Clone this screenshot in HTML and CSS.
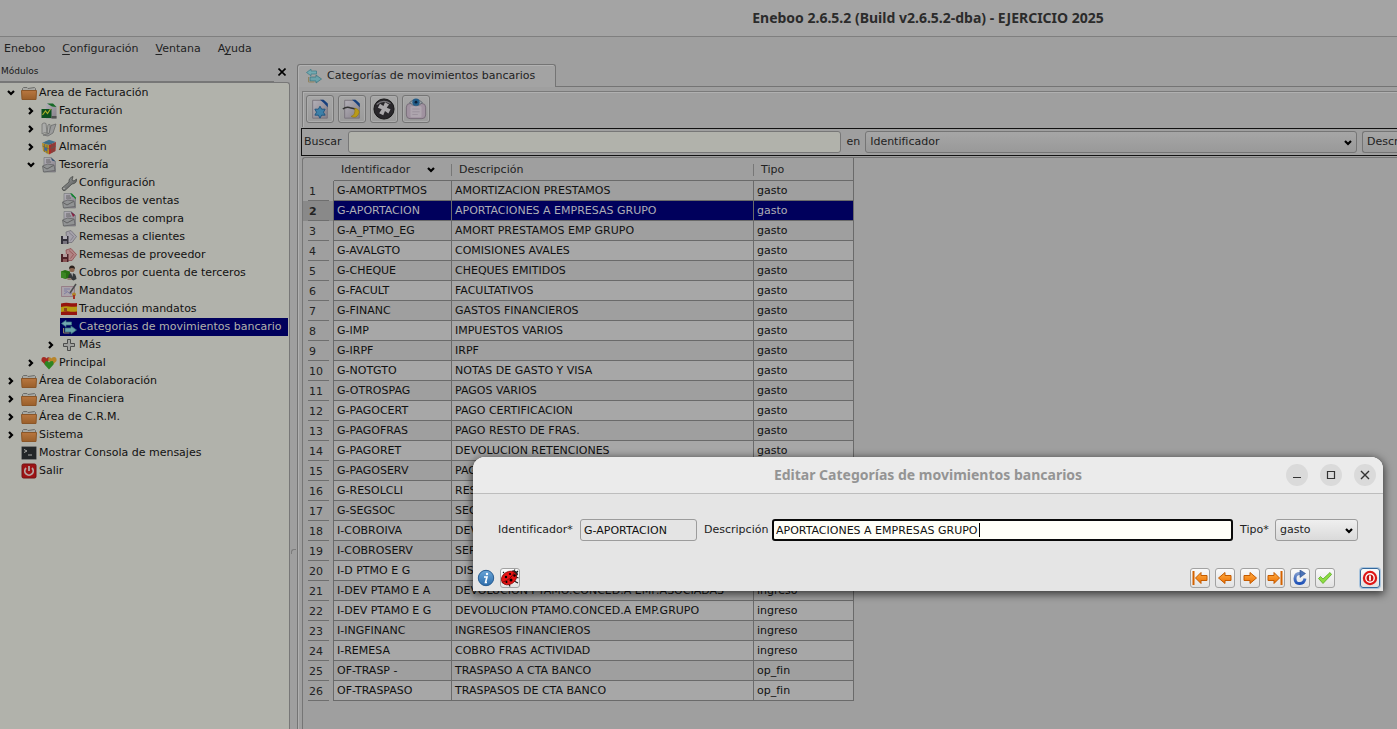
FILE: index.html
```html
<!DOCTYPE html>
<html lang="es">
<head>
<meta charset="utf-8">
<title>Eneboo 2.6.5.2 (Build v2.6.5.2-dba) - EJERCICIO 2025</title>
<link rel="stylesheet" href="styles.css">
</head>
<body>
<svg class="defs" aria-hidden="true">
  <defs>
    <linearGradient id="gFolder" x1="0" y1="0" x2="0" y2="1"><stop offset="0" stop-color="#b87740"/><stop offset="1" stop-color="#9a5f2a"/></linearGradient>
    <linearGradient id="gPage" x1="0" y1="0" x2="1" y2="1"><stop offset="0" stop-color="#b3b0b8"/><stop offset="1" stop-color="#857f88"/></linearGradient>
    <linearGradient id="gGrey" x1="0" y1="0" x2="1" y2="1"><stop offset="0" stop-color="#a5a7a6"/><stop offset="1" stop-color="#4c4e4e"/></linearGradient>
    <linearGradient id="gOrange" x1="0" y1="0" x2="0" y2="1"><stop offset="0" stop-color="#ffae45"/><stop offset="1" stop-color="#ee6f00"/></linearGradient>
    <linearGradient id="gInfo" x1="0" y1="0" x2="0" y2="1"><stop offset="0" stop-color="#6aa5d8"/><stop offset="1" stop-color="#2c6cab"/></linearGradient>
    <linearGradient id="gBlue" x1="0" y1="0" x2="0" y2="1"><stop offset="0" stop-color="#7a97cc"/><stop offset="1" stop-color="#1f52b8"/></linearGradient>
  </defs>
  <symbol id="down" viewBox="0 0 8 6"><path d="M1 1l3 3 3-3" fill="none" stroke="#000" stroke-width="2.200"/></symbol>
  <symbol id="right" viewBox="0 0 6 8"><path d="M1 1l3 3-3 3" fill="none" stroke="#000" stroke-width="2.200"/></symbol>
  <symbol id="folder" viewBox="0 0 16 16"><path d="M1.500 6V3.500l1-1H6l1 1 6.500-1 1 1v2" fill="#a7a8a4" stroke="#6c6d6a"/><path d="M.5 5.500h15l-.5 9H1z" fill="url(#gFolder)" stroke="#8a5628"/></symbol>
  <symbol id="fact" viewBox="0 0 16 16"><path d="M5 .5h6.500L15.500 4V15.500H5z" fill="url(#gPage)"/><path d="M6 .5h6L15.500 4 11 3.500z" fill="#176a26"/><path d="M.5 6h10v9H.5z" fill="#0c4f1f"/><path d="M1.500 12l3-4 2 2.500 3-4.500" fill="none" stroke="#a8ad28" stroke-width="1.200"/><path d="M10.500 13h5v2.500h-5z" fill="#505250"/></symbol>
  <symbol id="book" viewBox="0 0 16 16"><path d="M1 3q2-2 4-.5L6 12q-3-1-5 1zM6 12L7 4q1-1 2-.5v9.500z" fill="#aaaba9" stroke="#727372" stroke-width=".8"/><path d="M10 4.500l5-1.500-3 9-5 3-5-1 6-1.500z" fill="#9a9b9b" stroke="#646565" stroke-width=".7"/></symbol>
  <symbol id="cube" viewBox="0 0 16 16"><path d="M1 4l7-3.200L15 3 8 6z" fill="#3d7190"/><path d="M1 4l7 2v9.500L2 12z" fill="#b58c25"/><path d="M8 6l7-3-.5 9L8 15.500z" fill="#a92d2c"/><path d="M1.500 7l6.500 3 7-3M3.500 5v8M6 5.500v9M11 5v9M13 4v9M4 3l7 2" fill="none" stroke="#49655c" stroke-width=".6"/><path d="M3.500 8.200l2.500 1v3l-2.500-1z" fill="#3d64a0"/></symbol>
  <symbol id="doc" viewBox="0 0 16 16"><path d="M3 .5h7l4.500 4V15H3z" fill="url(#gPage)" stroke="#777a7c" stroke-width=".7"/><path d="M10 .5l4.500 4-3.500-1z" fill="#304e6c"/><path d="M1.500 9l5-2 6.500 1 1 5.500L2.500 15z" fill="#919394" stroke="#5b5d5e" stroke-width=".7"/><path d="M2 9.500l4 2.500 6.500-3.500M5 3h4M5 5h5" fill="none" stroke="#555" stroke-width=".8"/></symbol>
  <symbol id="recG" viewBox="0 0 16 16"><use href="#doc"/><path d="M9 .5h2L14.800 4.500v2z" fill="#138a2c"/></symbol>
  <symbol id="recR" viewBox="0 0 16 16"><use href="#doc"/><path d="M10 1l4 3-2 2z" fill="#8b2340"/></symbol>
  <symbol id="wrench" viewBox="0 0 16 16"><path d="M1 13L8 7q-.5-4 4-5.500L11 5l2 1 2.500-2q.5 4.500-4.500 5L4 15.500q-2.500 1-3-2.500z" fill="url(#gGrey)" stroke="#3e403f" stroke-width=".7"/><circle cx="3" cy="13.500" r=".8" fill="#b1b2ab"/></symbol>
  <symbol id="remC" viewBox="0 0 16 16"><path d="M5 3l5-1.500 5.500 6L11 13.500H6z" fill="#a4a1aa" stroke="#6c6a72" stroke-width=".7"/><path d="M8 3.500l4.500 4-3 4" fill="none" stroke="#76737c" stroke-width=".7"/><path d="M0 7h7.500v8H0z" fill="#33313a"/><path d="M2 7h4v3H2z" fill="#b0aeb5"/><path d="M2 12h4v3H2z" fill="#77747e"/></symbol>
  <symbol id="remP" viewBox="0 0 16 16"><path d="M5 3l5-1.500 5.500 6L11 13.500H6z" fill="#b18585" stroke="#8c4448" stroke-width=".7"/><path d="M8 3.500l4.500 4-3 4" fill="none" stroke="#91474b" stroke-width=".7"/><path d="M0 7h7.500v8H0z" fill="#4d2227"/><path d="M2 7h4v3H2z" fill="#b29c9c"/><path d="M2 12h4v3H2z" fill="#8a5656"/></symbol>
  <symbol id="person" viewBox="0 0 16 16"><path d="M0 6.500L4 5l5 1.500v6L5 14l-5-1.500z" fill="#287012"/><path d="M0 6.500L5 8v6l-5-1.500z" fill="#3b8523"/><circle cx="11" cy="4.500" r="2.600" fill="#8c6750"/><path d="M8 4q0-3.500 3-3.500T14 4q-3-2-6 0z" fill="#2b211c"/><path d="M7 13q.5-5 4-5 4 0 4.500 6l-3 1.500z" fill="#34393a"/><path d="M10 8h2l-.5 4z" fill="#aaa"/><path d="M5 13h5l1 2H7z" fill="#8f7a6a"/></symbol>
  <symbol id="mandate" viewBox="0 0 16 16"><path d="M.5 3.500h13v10H.5z" fill="#aaa3aa" stroke="#8d6b77" stroke-width=".7"/><path d="M3 6h6M3 8q3-1 5 2 1 2 3 0M3 11l3-2" fill="none" stroke="#7475a0" stroke-width=".8"/><path d="M15 1L9 10" stroke="#4b4b4d" stroke-width="1.500"/><circle cx="13" cy="11.500" r="2" fill="#b08428"/><path d="M12 12h2v4h-2z" fill="#a33325"/></symbol>
  <symbol id="flag" viewBox="0 0 16 16"><path d="M0 2.500q4-1 8-.5t8 0v12H0z" fill="#96140f"/><path d="M0 6q4-1 8-.5t8 0v5q-5 .500-8 0t-8 .5z" fill="#b59a13"/><path d="M3 7h3v3H3z" fill="#8f431b"/></symbol>
  <symbol id="swap" viewBox="0 0 16 16"><path d="M.5 4.500L5 1.200v1.800h5.500v3H5v1.800z" fill="#73a9b0" stroke="#3a7985" stroke-width=".7"/><path d="M4 9h6V7l5.500 4-5.500 4v-2H4z" fill="#6aa2aa" stroke="#37717c" stroke-width=".7"/><path d="M2.500 9v5h6" fill="none" stroke="#918461"/></symbol>
  <symbol id="plus" viewBox="0 0 16 16"><path d="M6.500 2.500h3v4h4v3h-4v4h-3v-4h-4v-3h4z" fill="#a0a19e" stroke="#4c4d4c"/></symbol>
  <symbol id="hearts" viewBox="0 0 16 16"><path d="M5 10.500L.5 6Q0 2 3 2q2 0 2.500 1.500Q7 1.500 9 3z" fill="#a32a23"/><path d="M11 10.500L15.500 6Q16 2 13 2q-2 0-2.500 1.500Q9 1.500 7 4z" fill="#b88429"/><path d="M8 14.500L3.500 9.500Q3.500 6 6 6q1.500 0 2 1.500Q8.500 6 11 6q2 0 1.500 3.500z" fill="#2d8422"/></symbol>
  <symbol id="console" viewBox="0 0 16 16"><rect x=".5" y="1.500" width="15" height="13" rx="1" fill="#222628" stroke="#777978"/><path d="M3 4.500l3 1.500-3 1.500M7 10h4" fill="none" stroke="#a8a9a6"/></symbol>
  <symbol id="power" viewBox="0 0 16 16"><rect x="1" y="1" width="14" height="14" rx="1.500" fill="#9d1315" stroke="#741012"/><path d="M5 5a4.200 4.200 0 1 0 6 0M8 3v5" fill="none" stroke="#b5a5a3" stroke-width="1.800"/></symbol>
  <symbol id="new" viewBox="0 0 24 24"><path d="M4 2.500h11L20 7v15H4z" fill="url(#gPage)" stroke="#77727b"/><path d="M12 2h4l4.500 4v4Q17 6 12 2z" fill="#163f7d"/><path d="M12 9l1.800 3.200h3.800L15.800 15.500l1.800 3.200h-3.800L12 22l-1.800-3.300H6.400l1.800-3.200-1.800-3.300h3.800z" fill="#3d80a8" stroke="#1e527d"/></symbol>
  <symbol id="edit" viewBox="0 0 24 24"><path d="M4 2.500h11L20 7v15H4z" fill="url(#gPage)" stroke="#77727b"/><path d="M12 2h4l4.500 4v4Q17 6 12 2z" fill="#163f7d"/><path d="M2 12q4-3 9-1l5 1" fill="none" stroke="#333" stroke-width="1.600"/><path d="M15 11q7 2 4 7-3 5-8 2 5-1 4-9z" fill="#b99a19" stroke="#8c720d" stroke-width=".6"/></symbol>
  <symbol id="del" viewBox="0 0 24 24"><circle cx="12" cy="12" r="11" fill="#29272b" stroke="#101010"/><path d="M4 7q7-6 15-1" fill="none" stroke="#77757a" stroke-width="1.500"/><path d="M9.500 5h5l-.5 4.500 4.500-.5v5l-4.500-.5.500 5h-5l.5-5-4.500.5V9l4.500.5z" fill="#aaa8ab" transform="rotate(28 12 12)"/></symbol>
  <symbol id="view" viewBox="0 0 24 24"><rect x="1.500" y="6" width="21" height="16.500" rx="4" fill="#a092a0" stroke="#746a75"/><rect x="6" y="9" width="12" height="12" rx="1" fill="#aea5ae"/><path d="M8 12h8M8 15h8M8 18h6" stroke="#9a909b"/><path d="M5 5q7-7 14 0-7 7-14 0z" fill="#9ca1a7" stroke="#5d6770"/><circle cx="12" cy="4.500" r="4" fill="#235c88"/><circle cx="12" cy="4.500" r="1.500" fill="#0b2038"/></symbol>
  <symbol id="info" viewBox="0 0 18 18"><circle cx="9" cy="9" r="7.700" fill="url(#gInfo)" stroke="#295d92"/><circle cx="10" cy="5" r="1.200" fill="#fff"/><path d="M7 8h3l-1.500 5.500H10" fill="none" stroke="#fff" stroke-width="1.600"/></symbol>
  <symbol id="bug" viewBox="0 0 18 18"><path d="M3 4L2 3M2 13l-1 1M8 15l1 2.500M13 12l4 2M15 8l2.500 1M12 3l2-2.500M15 4l2-2" stroke="#191919" stroke-width="1.100"/><path d="M11 1.500q5.500-.5 6 4L12 11z" fill="#252525"/><ellipse cx="8" cy="9" rx="8" ry="6.300" transform="rotate(-32 8 9)" fill="#e61212" stroke="#8a0909" stroke-width=".8"/><path d="M2 13Q9 11 13.500 3.500" fill="none" stroke="#6d0808" stroke-width=".8"/><circle cx="5" cy="8" r="1.200"/><circle cx="9" cy="5" r="1.100"/><circle cx="5.500" cy="13" r="1"/><circle cx="10" cy="11" r="1.500"/><circle cx="13.500" cy="6.500" r="1.200"/></symbol>
  <symbol id="arr" viewBox="0 0 16 16"><path d="M1.500 8L8 2.500v3h6v5H8v3z" fill="url(#gOrange)" stroke="#c45b00"/></symbol>
  <symbol id="first" viewBox="0 0 16 16"><path d="M1.500 1v14" stroke="#d46200" stroke-width="2"/><path d="M3.500 8L9 2.500v3h6v5H9v3z" fill="url(#gOrange)" stroke="#c45b00"/></symbol>
  <symbol id="reload" viewBox="0 0 16 16"><path d="M9 3.500Q3 3 3 8.500T8 13.500q4 0 5-5" fill="none" stroke="url(#gBlue)" stroke-width="3"/><path d="M8 0l5.500 3.500L8 7.500z" fill="#4b73b7" stroke="#274b8b" stroke-width=".6"/></symbol>
  <symbol id="check" viewBox="0 0 16 16"><path d="M1.500 8.500l2-2 2.500 2.500 7-6.500 1.500 2L6 13.500z" fill="#8ddd43" stroke="#58aa20" stroke-width=".8"/></symbol>
  <symbol id="stop" viewBox="0 0 16 16"><circle cx="8" cy="8" r="7.200" fill="#df1717"/><circle cx="8" cy="8" r="4.200" fill="#c71010" stroke="#fff" stroke-width="1.400"/><path d="M8 5.500v5" stroke="#fff" stroke-width="1.800"/></symbol>
</svg>

<div class="app">
  <header class="titlebar">Eneboo 2.6.5.2 (Build v2.6.5.2-dba) - EJERCICIO 2025</header>
  <nav class="menubar">
    <button>Eneboo</button>
    <button><u>C</u>onfiguración</button>
    <button><u>V</u>entana</button>
    <button>A<u>y</u>uda</button>
  </nav>
  <div class="workspace">
    <aside class="dock">
      <div class="dock-title"><span class="dock-name">Módulos</span><button class="dock-close" aria-label="Cerrar"><svg viewBox="0 0 8 8"><path d="M.5.5l7 7M7.500.5l-7 7" stroke="#000" stroke-width="1.600"/></svg></button></div>
      <ul class="tree">
        <li><div class="node"><svg class="tw d"><use href="#down"/></svg><svg class="ic"><use href="#folder"/></svg><span>Area de Facturación</span></div>
          <ul>
            <li><div class="node"><svg class="tw r"><use href="#right"/></svg><svg class="ic"><use href="#fact"/></svg><span>Facturación</span></div></li>
            <li><div class="node"><svg class="tw r"><use href="#right"/></svg><svg class="ic"><use href="#book"/></svg><span>Informes</span></div></li>
            <li><div class="node"><svg class="tw r"><use href="#right"/></svg><svg class="ic"><use href="#cube"/></svg><span>Almacén</span></div></li>
            <li><div class="node"><svg class="tw d"><use href="#down"/></svg><svg class="ic"><use href="#doc"/></svg><span>Tesorería</span></div>
              <ul>
                <li><div class="node leaf"><svg class="ic"><use href="#wrench"/></svg><span>Configuración</span></div></li>
                <li><div class="node leaf"><svg class="ic"><use href="#recG"/></svg><span>Recibos de ventas</span></div></li>
                <li><div class="node leaf"><svg class="ic"><use href="#recR"/></svg><span>Recibos de compra</span></div></li>
                <li><div class="node leaf"><svg class="ic"><use href="#remC"/></svg><span>Remesas a clientes</span></div></li>
                <li><div class="node leaf"><svg class="ic"><use href="#remP"/></svg><span>Remesas de proveedor</span></div></li>
                <li><div class="node leaf"><svg class="ic"><use href="#person"/></svg><span>Cobros por cuenta de terceros</span></div></li>
                <li><div class="node leaf"><svg class="ic"><use href="#mandate"/></svg><span>Mandatos</span></div></li>
                <li><div class="node leaf"><svg class="ic"><use href="#flag"/></svg><span>Traducción mandatos</span></div></li>
                <li><div class="node leaf selected"><svg class="ic"><use href="#swap"/></svg><span>Categorias de movimientos bancario</span></div></li>
                <li><div class="node"><svg class="tw r"><use href="#right"/></svg><svg class="ic"><use href="#plus"/></svg><span>Más</span></div></li>
              </ul>
            </li>
            <li><div class="node"><svg class="tw r"><use href="#right"/></svg><svg class="ic"><use href="#hearts"/></svg><span>Principal</span></div></li>
          </ul>
        </li>
        <li><div class="node"><svg class="tw r"><use href="#right"/></svg><svg class="ic"><use href="#folder"/></svg><span>Área de Colaboración</span></div></li>
        <li><div class="node"><svg class="tw r"><use href="#right"/></svg><svg class="ic"><use href="#folder"/></svg><span>Area Financiera</span></div></li>
        <li><div class="node"><svg class="tw r"><use href="#right"/></svg><svg class="ic"><use href="#folder"/></svg><span>Área de C.R.M.</span></div></li>
        <li><div class="node"><svg class="tw r"><use href="#right"/></svg><svg class="ic"><use href="#folder"/></svg><span>Sistema</span></div></li>
        <li><div class="node leaf"><svg class="ic"><use href="#console"/></svg><span>Mostrar Consola de mensajes</span></div></li>
        <li><div class="node leaf"><svg class="ic"><use href="#power"/></svg><span>Salir</span></div></li>
      </ul>
    </aside>
    <div class="splitter"><i></i></div>
    <main class="pane">
      <div class="tabs"><button class="tab"><svg class="ic"><use href="#swap"/></svg>Categorías de movimientos bancarios</button><div class="tabs-rest"></div></div>
      <div class="pane-body">
        <div class="toolbar">
          <button aria-label="Nuevo"><svg><use href="#new"/></svg></button>
          <button aria-label="Editar"><svg><use href="#edit"/></svg></button>
          <button aria-label="Borrar"><svg><use href="#del"/></svg></button>
          <button aria-label="Ver"><svg><use href="#view"/></svg></button>
        </div>
        <form class="search">
          <label for="q">Buscar</label>
          <input id="q" class="search-text" type="text">
          <label for="f1">en</label>
          <div class="combo"><select id="f1"><option>Identificador</option></select><svg><use href="#down"/></svg></div>
          <div class="combo cut"><select aria-label="Segundo campo"><option>Descripción</option></select></div>
        </form>
        <div class="grid">
          <table>
            <colgroup><col class="c-num"><col class="c-id"><col class="c-desc"><col class="c-tipo"></colgroup>
            <thead><tr><th></th><th><div class="h sorted">Identificador<svg><use href="#down"/></svg></div></th><th><div class="h">Descripción</div></th><th><div class="h">Tipo</div></th></tr></thead>
            <tbody>
              <tr><th><b>1</b></th><td>G-AMORTPTMOS</td><td>AMORTIZACION PRESTAMOS</td><td>gasto</td></tr>
              <tr class="current"><th><b>2</b></th><td>G-APORTACION</td><td>APORTACIONES A EMPRESAS GRUPO</td><td>gasto</td></tr>
              <tr><th><b>3</b></th><td>G-A_PTMO_EG</td><td>AMORT PRESTAMOS EMP GRUPO</td><td>gasto</td></tr>
              <tr><th><b>4</b></th><td>G-AVALGTO</td><td>COMISIONES AVALES</td><td>gasto</td></tr>
              <tr><th><b>5</b></th><td>G-CHEQUE</td><td>CHEQUES EMITIDOS</td><td>gasto</td></tr>
              <tr><th><b>6</b></th><td>G-FACULT</td><td>FACULTATIVOS</td><td>gasto</td></tr>
              <tr><th><b>7</b></th><td>G-FINANC</td><td>GASTOS FINANCIEROS</td><td>gasto</td></tr>
              <tr><th><b>8</b></th><td>G-IMP</td><td>IMPUESTOS VARIOS</td><td>gasto</td></tr>
              <tr><th><b>9</b></th><td>G-IRPF</td><td>IRPF</td><td>gasto</td></tr>
              <tr><th><b>10</b></th><td>G-NOTGTO</td><td>NOTAS DE GASTO Y VISA</td><td>gasto</td></tr>
              <tr><th><b>11</b></th><td>G-OTROSPAG</td><td>PAGOS VARIOS</td><td>gasto</td></tr>
              <tr><th><b>12</b></th><td>G-PAGOCERT</td><td>PAGO CERTIFICACION</td><td>gasto</td></tr>
              <tr><th><b>13</b></th><td>G-PAGOFRAS</td><td>PAGO RESTO DE FRAS.</td><td>gasto</td></tr>
              <tr><th><b>14</b></th><td>G-PAGORET</td><td>DEVOLUCION RETENCIONES</td><td>gasto</td></tr>
              <tr><th><b>15</b></th><td>G-PAGOSERV</td><td>PAG</td><td></td></tr>
              <tr><th><b>16</b></th><td>G-RESOLCLI</td><td>RES</td><td></td></tr>
              <tr><th><b>17</b></th><td>G-SEGSOC</td><td>SEG</td><td></td></tr>
              <tr><th><b>18</b></th><td>I-COBROIVA</td><td>DEV</td><td></td></tr>
              <tr><th><b>19</b></th><td>I-COBROSERV</td><td>SER</td><td></td></tr>
              <tr><th><b>20</b></th><td>I-D PTMO E G</td><td>DIS</td><td></td></tr>
              <tr><th><b>21</b></th><td>I-DEV PTAMO E A</td><td>DEVOLUCION PTAMO.CONCED.A EMP.ASOCIADAS</td><td>ingreso</td></tr>
              <tr><th><b>22</b></th><td>I-DEV PTAMO E G</td><td>DEVOLUCION PTAMO.CONCED.A EMP.GRUPO</td><td>ingreso</td></tr>
              <tr><th><b>23</b></th><td>I-INGFINANC</td><td>INGRESOS FINANCIEROS</td><td>ingreso</td></tr>
              <tr><th><b>24</b></th><td>I-REMESA</td><td>COBRO FRAS ACTIVIDAD</td><td>ingreso</td></tr>
              <tr><th><b>25</b></th><td>OF-TRASP -</td><td>TRASPASO A CTA BANCO</td><td>op_fin</td></tr>
              <tr><th><b>26</b></th><td>OF-TRASPASO</td><td>TRASPASOS DE CTA BANCO</td><td>op_fin</td></tr>
            </tbody>
          </table>
        </div>
      </div>
    </main>
  </div>

  <section class="dialog" role="dialog" aria-labelledby="dlg">
    <header class="dlg-title">
      <h2 id="dlg">Editar Categorías de movimientos bancarios</h2>
      <div class="wm">
        <button aria-label="Minimizar"><svg viewBox="0 0 10 10"><path d="M1 7.500h8" stroke="#333"/></svg></button>
        <button aria-label="Maximizar"><svg viewBox="0 0 10 10"><path d="M1.500 1.500h7v7h-7z" fill="none" stroke="#333" stroke-width="1.200"/></svg></button>
        <button aria-label="Cerrar"><svg viewBox="0 0 10 10"><path d="M1 1l8 8M9 1L1 9" stroke="#333" stroke-width="1.400"/></svg></button>
      </div>
    </header>
    <form class="fields">
      <label for="id" class="l-id">Identificador*</label>
      <input id="id" class="f-id" type="text" value="G-APORTACION" readonly>
      <label for="desc" class="l-desc">Descripción</label>
      <div class="f-desc"><input id="desc" type="text" value="APORTACIONES A EMPRESAS GRUPO"><i class="caret"></i></div>
      <label for="tipo" class="l-tipo">Tipo*</label>
      <div class="combo"><select id="tipo"><option>gasto</option></select><svg><use href="#down"/></svg></div>
    </form>
    <footer class="actions">
      <button class="plain" aria-label="Información"><svg><use href="#info"/></svg></button>
      <button class="bug" aria-label="Depurar"><svg><use href="#bug"/></svg></button>
      <span class="spacer"></span>
      <button aria-label="Primero"><svg><use href="#first"/></svg></button>
      <button aria-label="Anterior"><svg><use href="#arr"/></svg></button>
      <button aria-label="Siguiente"><svg class="flip"><use href="#arr"/></svg></button>
      <button aria-label="Último"><svg class="flip"><use href="#first"/></svg></button>
      <button aria-label="Recargar"><svg><use href="#reload"/></svg></button>
      <button aria-label="Aceptar"><svg><use href="#check"/></svg></button>
      <button class="cancel" aria-label="Cancelar"><svg><use href="#stop"/></svg></button>
    </footer>
  </section>
</div>
</body>
</html>
```
FILE: styles.css
```css
* { box-sizing: border-box; }
body { margin: 0; background: #9f9f9f; color: #191919; font: 11px/18px "DejaVu Sans", sans-serif; }
button, input, select { font: inherit; color: inherit; margin: 0; padding: 0; }
button { background: none; border: 0; }
ul { list-style: none; margin: 0; padding: 0; }
svg { display: block; flex: none; }
.defs { position: absolute; width: 0; height: 0; }

.app { position: relative; display: flex; flex-direction: column; height: 100vh; min-height: 600px; overflow: hidden; }
.titlebar { height: 37px; padding-left: 459px; border-bottom: 1px solid #7f7f7f; background: #a4a4a4; color: #2b2b2b; text-align: center; font: bold 14px/36px "Noto Sans", sans-serif; }
.menubar { display: flex; gap: 17px; padding: 2px 4px; height: 27px; color: #222; }
.menubar button { line-height: 18px; height: 20px; }
.menubar u { text-underline-offset: 2px; }
.workspace { display: flex; flex: 1; min-height: 0; }

.dock { width: 290px; flex: none; display: flex; flex-direction: column; }
.dock-title { display: flex; height: 18px; font-size: 9px; line-height: 14px; }
.dock-name { flex: 1; padding-left: 1px; border-bottom: 1px solid #777; }
.dock-close { width: 16px; height: 15px; display: flex; align-items: center; justify-content: center; }
.dock-close svg { width: 8px; height: 8px; }
.tree { flex: 1; border: 1px solid #777; border-left: 0; border-bottom: 0; border-radius: 0 3px 0 0; background: #b1b2ab; padding: 1px 1px 0 0; overflow: hidden; color: #111; }
.tree ul { padding-left: 20px; }
.node { display: flex; align-items: center; height: 18px; padding-left: 1px; white-space: nowrap; }
.tw { width: 20px; height: 8px; padding: 0 6px; }
.tw.d { padding: 1px 6px; }
.ic { width: 16px; height: 16px; margin-right: 2px; }
.leaf { padding-left: 1px; margin-left: 20px; }
.selected { background: #00005c; color: #b1b2ab; overflow: hidden; }
.splitter { width: 7px; flex: none; display: flex; align-items: center; }
.splitter i { width: 5px; height: 5px; margin: 310px 0 0 1px; border: 1px solid #7c7c7c; border-right: 0; border-bottom: 0; border-radius: 3px 0 0; }

.pane { flex: 1; min-width: 0; display: flex; flex-direction: column; }
.tabs { display: flex; height: 23px; }
.tab { display: flex; align-items: center; gap: 5px; padding: 0 20px 0 8px; border: 1px solid #747474; border-bottom: 0; border-radius: 3px 3px 0 0; background: #a3a3a3; box-shadow: inset 1px 1px #b2b2b2; white-space: nowrap; color: #1e1e1e; }
.tab .ic { margin: 0; }
.tabs-rest { flex: 1; border-bottom: 1px solid #747474; }
.pane-body { flex: 1; display: flex; flex-direction: column; min-height: 0; border-left: 1px solid #747474; padding: 4px 0 0 3px; box-shadow: inset 1px 0 #b0b0b0; }
.toolbar { display: flex; gap: 4px; height: 36px; margin-left: 1px; padding: 3px; border: 1px solid #7a7a7a; border-right: 0; border-bottom: 0; box-shadow: inset 1px 1px #b0b0b0; }
.toolbar button { width: 28px; height: 28px; display: flex; align-items: center; justify-content: center; border: 1px solid #757575; border-radius: 3px; background: linear-gradient(#a7a7a7, #9b9b9b); box-shadow: inset 0 0 0 1px #acacac; }
.toolbar svg { width: 24px; height: 22px; }
.search { display: flex; align-items: center; gap: 5px; margin-top: 1px; height: 28px; border: 1px solid #111; border-right: 0; padding-left: 2px; color: #1e1e1e; }
.search-text { flex: 1; min-width: 0; height: 22px; margin-left: 1px; border: 1px solid #777; border-radius: 3px; background: #b1b2ab; }
.combo { position: relative; flex: 1; min-width: 0; }
.combo select { display: block; appearance: none; width: 100%; height: 22px; padding: 0 20px 0 4px; border: 1px solid #757575; border-radius: 3px; background: linear-gradient(#a6a6a6, #999); }
.combo svg { position: absolute; right: 5px; top: 9px; width: 8px; height: 6px; pointer-events: none; }
.combo.cut { flex: 0 0 35px; }
.combo.cut select { padding-right: 0; border-right: 0; border-radius: 3px 0 0 3px; }

.grid { flex: 1; min-height: 0; margin: 1px 0 0 1px; border: 1px solid #757575; border-right: 0; border-bottom: 0; border-radius: 3px 0 0; overflow: hidden; }
table { table-layout: fixed; width: 551px; border-collapse: separate; border-spacing: 0; color: #101010; }
.c-num { width: 31px; }
.c-id { width: 118px; }
.c-desc { width: 302px; }
.c-tipo { width: 100px; }
th { padding: 0; font-weight: normal; text-align: left; color: #222; }
td { height: 20px; padding: 1px 3px 0; line-height: 18px; border-right: 1px solid #6a6a6a; border-bottom: 1px solid #6a6a6a; white-space: nowrap; }
thead th { height: 23px; padding: 2px 0 0; border-bottom: 1px solid #6a6a6a; }
thead th:first-child { border-bottom-color: transparent; }
thead th:last-child { border-right: 1px solid #6a6a6a; }
.h { height: 12px; line-height: 12px; padding-left: 7px; border-right: 1px solid #777; }
thead th:last-child .h { border-right: 0; }
.sorted { display: flex; align-items: center; justify-content: space-between; padding-right: 16px; }
.sorted svg { width: 8px; height: 6px; }
tbody th { border-right: 1px solid #6a6a6a; padding: 0 4px 0 5px; }
tbody b { display: block; height: 19px; padding-left: 1px; line-height: 19px; font-weight: normal; border-bottom: 1px solid #6e6e6e; }
tbody tr:nth-child(even) td { background: #a7a7a7; }
tbody .current th { background: #898989; }
tbody .current b { font-weight: bold; }
tbody tr.current td { background: #00005c; color: #aeaeb6; }

.dialog { position: absolute; left: 473px; right: 14px; top: 457px; border-radius: 12px 12px 0 0; background: #e5e5e5; box-shadow: 0 2px 8px 1px rgba(0,0,0,.65), inset 0 1px #f6f6f6; color: #222; }
.dlg-title { display: flex; align-items: center; height: 37px; padding: 0 7px 0 97px; border-bottom: 1px solid #bdbdbd; border-radius: 12px 12px 0 0; background: #ebebeb; }
.dlg-title h2 { flex: 1; margin: 0; text-align: center; font: bold 14px/20px "Noto Sans", sans-serif; color: #949494; }
.wm { display: flex; gap: 12px; }
.wm button { width: 22px; height: 22px; border-radius: 50%; background: #dadada; display: flex; align-items: center; justify-content: center; }
.wm svg { width: 10px; height: 10px; }
.fields { display: flex; align-items: center; gap: 3px; padding: 25px 25px 0; }
.fields input { height: 22px; padding: 1px 3px 0; border: 1px solid #9c9c9c; border-radius: 3px; color: #111; outline: 0; }
.fields .f-id { width: 117px; background: #e4e4e4; }
.l-id { width: 79px; }
.l-desc { width: 65px; margin-left: 4px; }
.l-tipo { width: 32px; margin-left: 4px; }
.f-desc { flex: 1; position: relative; }
.fields .f-desc input { width: 100%; display: block; border: 2px solid #0a0a0a; padding: 1px 2px 0; background: #fffff8; }
.caret { position: absolute; left: 207px; top: 4px; width: 1px; height: 14px; background: #000; }
.fields .combo { flex: 0 0 83px; }
.fields .combo select { border-color: #9c9c9c; background: linear-gradient(#efefef, #dadada); }
.actions { display: flex; align-items: center; gap: 5px; padding: 27px 3px 3px 4px; }
.actions button { width: 20px; height: 20px; display: flex; align-items: center; justify-content: center; border: 1px solid #a2a2a2; border-radius: 3px; background: linear-gradient(#fafafa, #e2e2e2); }
.actions svg { width: 16px; height: 16px; }
.actions .plain { width: 18px; border: 0; background: none; }
.actions .plain svg, .actions .bug svg { width: 18px; height: 18px; }
.spacer { flex: 1; }
.flip { transform: scaleX(-1); }
.actions .cancel { margin-left: 20px; border-color: #33689c; box-shadow: 0 0 0 1px #a9c4dd; }
```
